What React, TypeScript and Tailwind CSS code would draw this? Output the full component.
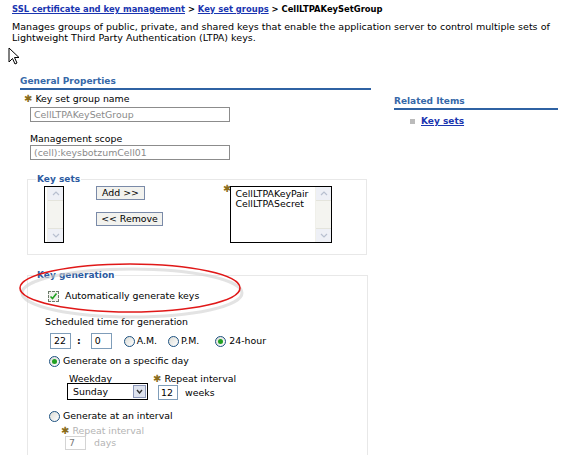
import React from 'react';

const Star = ({ className = '' }: { className?: string }) => (
  <span className={`text-[#8a6d1a] text-[10px] leading-none ${className}`}>✱</span>
);

const Radio = ({ checked = false, dim = false }: { checked?: boolean; dim?: boolean }) => (
  <span
    className={`inline-flex items-center justify-center w-[11px] h-[11px] rounded-full border ${
      dim ? 'border-[#9bb3cc]' : 'border-[#1c5180]'
    } bg-gradient-to-br from-[#dcdcd6] to-white`}
  >
    {checked && <span className="w-[5px] h-[5px] rounded-full bg-[#21a121]" />}
  </span>
);

const ScrollBar = () => (
  <div className="flex flex-col w-[16px] h-full bg-[#f4f4f0] border-l border-[#f0f0ea]">
    <div className="h-[14px] flex items-center justify-center bg-[#eef0f6] border-b border-[#e4e4dc]">
      <svg width="8" height="5" viewBox="0 0 8 5">
        <path d="M1 4 L4 1 L7 4" stroke="#b8c0d0" strokeWidth="1.2" fill="none" />
      </svg>
    </div>
    <div className="flex-1" />
    <div className="h-[14px] flex items-center justify-center bg-[#eef0f6] border-t border-[#e4e4dc]">
      <svg width="8" height="5" viewBox="0 0 8 5">
        <path d="M1 1 L4 4 L7 1" stroke="#b8c0d0" strokeWidth="1.2" fill="none" />
      </svg>
    </div>
  </div>
);

const App = () => {
  return (
    <div className="relative w-[572px] h-[455px] overflow-hidden bg-white text-black font-['DejaVu_Sans',Verdana,sans-serif] text-[9.4px]">
      <div className="pl-3 pt-[3px]">
        <div className="font-bold text-[8.4px] leading-[12px]">
          <a className="text-[#1a35b0] underline">SSL certificate and key management</a>
          <span> &gt; </span>
          <a className="text-[#1a35b0] underline">Key set groups</a>
          <span> &gt; CellLTPAKeySetGroup</span>
        </div>
        <p className="mt-[6px] leading-[11px] w-[556px] text-[9.55px]">
          Manages groups of public, private, and shared keys that enable the application server to control multiple sets of
          Lightweight Third Party Authentication (LTPA) keys.
        </p>
      </div>

      <div className="flex pl-5 mt-[33px]">
        <div className="w-[351px]">
          <div className="font-bold text-[#3668a8] text-[9px] leading-[11px] pb-[1px] border-b-2 border-[#2f62a3]">
            General Properties
          </div>

          <div className="pl-[4px] mt-[3px]">
            <div className="flex items-center gap-[3px] leading-[12px]">
              <Star />
              <span>Key set group name</span>
            </div>
            <div className="ml-[6px] mt-[2px] w-[200px] h-[15px] border border-[#8c8c8c] text-[#8a8a8a] pl-[3px] leading-[13px]">
              CellLTPAKeySetGroup
            </div>
            <div className="ml-[6px] mt-[11px] leading-[12px]">Management scope</div>
            <div className="ml-[6px] mt-0 w-[200px] h-[15px] border border-[#8c8c8c] text-[#8a8a8a] pl-[3px] leading-[13px]">
              (cell):keysbotzumCell01
            </div>
          </div>

          <fieldset className="ml-[7px] mt-[14px] w-[340px] h-[81px] border border-[#e8e8e8] pl-[16px] pr-2">
            <legend className="font-bold text-[#2c5aa0] text-[9px] px-[1px] leading-[10px] ml-[-8px]">Key sets</legend>
            <div className="flex items-start mt-[2px]">
              <div className="w-[20px] h-[57px] border border-black flex justify-end">
                <ScrollBar />
              </div>
              <div className="ml-[32px] flex flex-col">
                <div className="w-[49px] h-[14px] border border-[#7a8aa8] bg-[#f2f2ee] flex items-center justify-center">
                  Add &gt;&gt;
                </div>
                <div className="mt-[12px] w-[67px] h-[14px] border border-[#7a8aa8] bg-[#f2f2ee] flex items-center justify-center">
                  &lt;&lt; Remove
                </div>
              </div>
              <Star className="ml-[60px] mt-[-2px]" />
              <div className="ml-[-1px] w-[102px] h-[57px] border border-black flex">
                <div className="flex-1 pl-[4px] pt-[2px] leading-[10px]">
                  <div>CellLTPAKeyPair</div>
                  <div>CellLTPASecret</div>
                </div>
                <ScrollBar />
              </div>
            </div>
          </fieldset>

          <fieldset className="ml-[7px] mt-[15px] w-[341px] h-[200px] border border-[#e8e8e8] pl-[17px]">
            <legend className="font-bold text-[#2c5aa0] text-[9px] px-[1px] leading-[10px] ml-[-9px]">Key generation</legend>
            <div className="flex items-center mt-[9px] ml-[3px]">
              <span className="w-[11px] h-[11px] border border-dashed border-[#6b7b6b] bg-[#f2f2ee] flex items-center justify-center">
                <svg width="9" height="9" viewBox="0 0 9 9">
                  <path d="M1.5 4.5 L3.5 6.5 L7.5 1.5" stroke="#21a121" strokeWidth="1.6" fill="none" />
                </svg>
              </span>
              <span className="ml-[6px]">Automatically generate keys</span>
            </div>

            <div className="mt-[13px] leading-[12px]">Scheduled time for generation</div>
            <div className="flex items-center mt-[5px] ml-[5px]">
              <div className="w-[21px] h-[16px] border border-[#7f9db9] pl-[3px] leading-[14px]">22</div>
              <span className="ml-[6px] font-bold">:</span>
              <div className="ml-[10px] w-[21px] h-[16px] border border-[#7f9db9] pl-[3px] leading-[14px]">0</div>
              <span className="ml-[12px] inline-flex"><Radio /></span>
              <span className="ml-[2px]">A.M.</span>
              <span className="ml-[11px] inline-flex"><Radio /></span>
              <span className="ml-[2px]">P.M.</span>
              <span className="ml-[16px] inline-flex"><Radio checked /></span>
              <span className="ml-[3px]">24-hour</span>
            </div>

            <div className="flex items-center mt-[5px] ml-[4px]">
              <Radio checked />
              <span className="ml-[3px]">Generate on a specific day</span>
            </div>
            <div className="flex ml-[22px] mt-[6px]">
              <div>
                <div className="ml-[2px] leading-[10px]">Weekday</div>
                <div className="mt-[-1px] w-[81px] h-[17px] border border-black flex items-center justify-between pl-[5px] pr-[1px]">
                  <span>Sunday</span>
                  <span className="w-[13px] h-[13px] border border-[#8a96b8] bg-[#dde2ee] flex items-center justify-center">
                    <svg width="7" height="5" viewBox="0 0 7 5">
                      <path d="M1 1 L3.5 4 L6 1" stroke="#333" strokeWidth="1.4" fill="none" />
                    </svg>
                  </span>
                </div>
              </div>
              <div className="ml-[5px]">
                <div className="flex items-center gap-[3px] leading-[10px]">
                  <Star />
                  <span>Repeat interval</span>
                </div>
                <div className="flex items-center mt-[1px] ml-[5px]">
                  <div className="w-[20px] h-[15px] border border-[#7f9db9] pl-[2px] leading-[13px]">12</div>
                  <span className="ml-[7px]">weeks</span>
                </div>
              </div>
            </div>

            <div className="flex items-center mt-[9px] ml-[4px]">
              <Radio />
              <span className="ml-[3px]">Generate at an interval</span>
            </div>
            <div className="ml-[16px] mt-[3px] text-[#b4b4b4]">
              <div className="flex items-center gap-[3px] leading-[10px]">
                <Star />
                <span>Repeat interval</span>
              </div>
              <div className="flex items-center mt-0 ml-[4px]">
                <div className="w-[21px] h-[14px] border border-[#d4d4d4] pl-[3px] leading-[12px] text-[#7a7a7a]">7</div>
                <span className="ml-[8px]">days</span>
              </div>
            </div>
          </fieldset>
        </div>

        <div className="ml-[23px] mt-[20px] w-[164px]">
          <div className="font-bold text-[#3668a8] text-[9px] leading-[11px] pb-[1px] border-b-2 border-[#2f62a3]">Related Items</div>
          <div className="flex items-center mt-[5px] ml-[16px]">
            <span className="w-[5px] h-[5px] bg-[#bbbbbb]" />
            <a className="ml-[6px] text-[#1a35b0] underline font-bold text-[9px]">Key sets</a>
          </div>
        </div>
      </div>

      <svg className="absolute left-[8px] top-[47px]" width="12" height="18" viewBox="0 0 12 18">
        <path d="M1 1 L1 15 L4.5 11.5 L7 17 L9 16 L6.5 10.5 L11 10.5 Z" fill="white" stroke="black" strokeWidth="1" />
      </svg>

      <svg className="absolute left-[12px] top-[259px]" width="236" height="60" viewBox="0 0 236 60">
        <ellipse cx="118" cy="31" rx="110" ry="24" fill="none" stroke="#d0d0d0" strokeWidth="3" opacity="0.6" transform="translate(2 3)" />
        <ellipse cx="118" cy="29" rx="110" ry="24" fill="none" stroke="#e01818" strokeWidth="1.6" />
      </svg>
    </div>
  );
};

export default App;
